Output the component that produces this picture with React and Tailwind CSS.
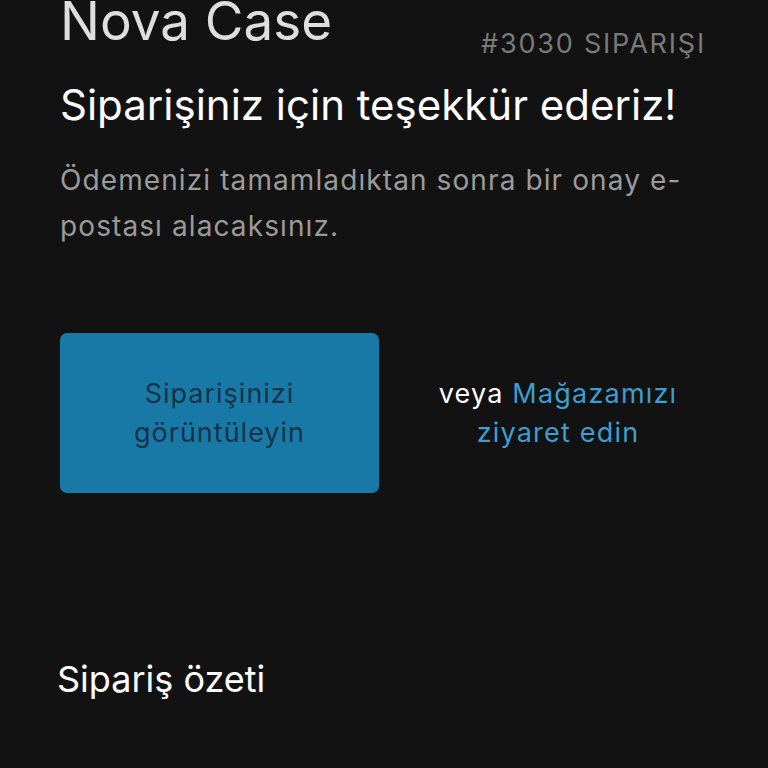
// App.jsx
const App = () => {
	return (
		<div className="min-h-[768px] w-[768px] overflow-hidden bg-[#121212]" style={{fontFamily: 'Inter, "Liberation Sans", Arial, sans-serif'}}>
			<div className="pl-[60px] pr-[62px]">
				{/* Header */}
				<div className="flex items-start justify-between">
					<h1 className="-mt-[10px] text-[53px] leading-[62px] text-[#dedede]">Nova Case</h1>
					<span className="mt-[28px] text-[27px] leading-[32px] tracking-[1.8px] text-[#7a7a7a]">#3030 SIPARIŞI</span>
				</div>

				<h2 className="mt-[19px] text-[42px] leading-[52px] text-white">Siparişiniz için teşekkür ederiz!</h2>
				<p className="mt-[26px] w-[650px] text-[28px] leading-[46px] tracking-[1.1px] text-[#9b9b9b]">
					Ödemenizi tamamladıktan sonra bir onay e-postası alacaksınız.
				</p>

				{/* Actions */}
				<div className="mt-[84px] flex items-center">
					<button className="flex h-[160px] w-[319px] shrink-0 items-center justify-center rounded-[7px] bg-[#1879a7] px-6 text-center text-[27px] leading-[39px] tracking-[1px] text-[#153247]">
						Siparişinizi<br/>görüntüleyin
					</button>
					<p className="w-[358px] shrink-0 text-center text-[27px] leading-[39px] tracking-[1.2px] text-white">
						veya <a href="#" className="text-[#3d9ed2]">Mağazamızı</a><br/>
						<a href="#" className="text-[#3d9ed2]">ziyaret edin</a>
					</p>
				</div>

				<h3 className="mt-[164px] -ml-[3px] text-[36px] leading-[44px] text-white">Sipariş özeti</h3>
			</div>
		</div>
	);
};

export default App;
